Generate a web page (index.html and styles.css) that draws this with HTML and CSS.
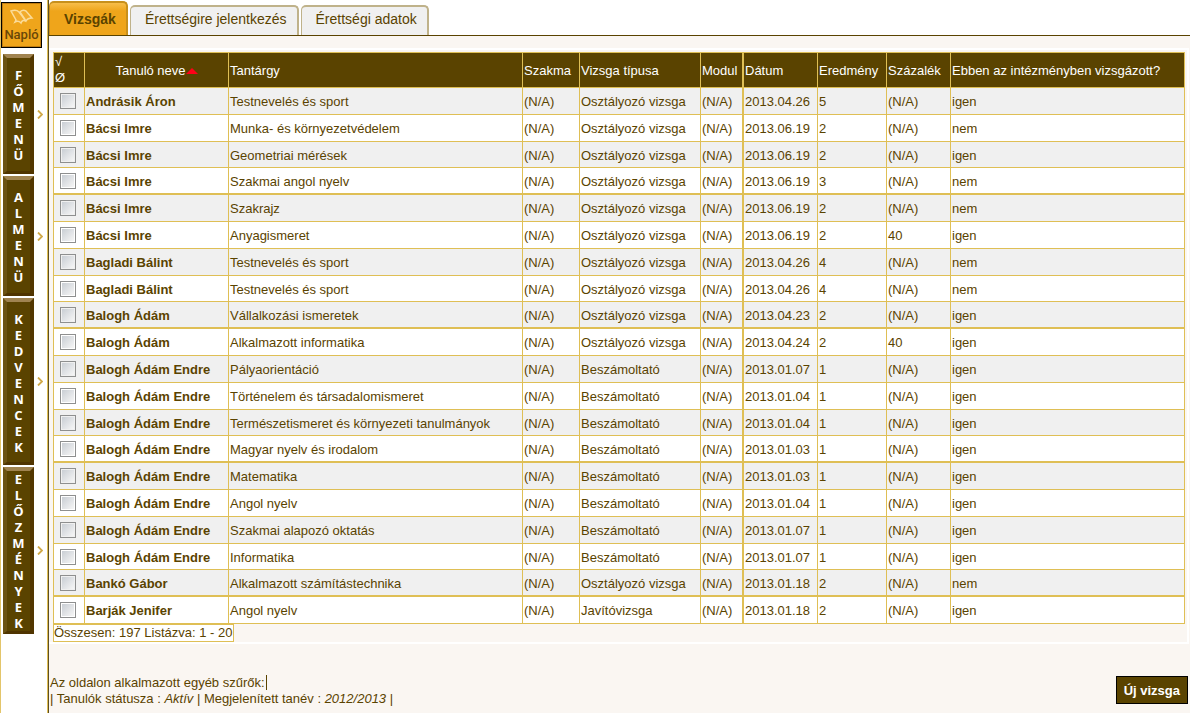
FILE: index.html
```html
<!DOCTYPE html>
<html lang="hu">
<head>
<meta charset="utf-8">
<title>Napló - Vizsgák</title>
<link rel="stylesheet" href="styles.css">
</head>
<body>
<div class="app">
  <aside class="sidebar">
    <a class="logo" href="#">
      <svg class="logo-icon" width="24" height="16" viewBox="0 0 24 16" aria-hidden="true">
        <path d="M1 2C4 1 7 1 9 3L16 12C14 11 12 11 11 14C9 12 7 12 5 13L6 11Z" fill="#f2ab2c" stroke="#fbdc9a" stroke-width="1.5"/>
        <path d="M10 3C12 1 14 1 16 2L22 9C19 9 17 10 16 12Z" fill="#f2ab2c" stroke="#fbdc9a" stroke-width="1.5"/>
      </svg>
      <span>Napló</span>
    </a>
    <nav class="menus" id="menus"></nav>
  </aside>
  <main class="content">
    <nav class="tabs">
      <a class="tab active" href="#">Vizsgák</a>
      <a class="tab" href="#">Érettségire jelentkezés</a>
      <a class="tab" href="#">Érettségi adatok</a>
    </nav>
    <section class="panel">
      <table class="exams">
        <colgroup>
          <col class="c-check"><col class="c-name"><col class="c-subject"><col class="c-trade"><col class="c-type"><col class="c-module"><col class="c-date"><col class="c-result"><col class="c-percent"><col>
        </colgroup>
        <thead>
          <tr>
            <th class="marks">√<br>Ø</th>
            <th class="sorted">Tanuló neve<svg class="sort-icon" width="12" height="6" viewBox="0 0 12 6" aria-hidden="true"><path d="M6 0L12 6H0Z" fill="#ff0018"/></svg></th>
            <th>Tantárgy</th><th>Szakma</th><th>Vizsga típusa</th><th>Modul</th><th>Dátum</th><th>Eredmény</th><th>Százalék</th><th>Ebben az intézményben vizsgázott?</th>
          </tr>
        </thead>
        <tbody id="rows"></tbody>
      </table>
      <p class="summary">Összesen: 197 Listázva: 1 - 20</p>
    </section>
    <footer class="footer">
      <div class="filters">
        <p><span class="caret">Az oldalon alkalmazott egyéb szűrők:</span></p>
        <p>| Tanulók státusza : <em>Aktív</em> | Megjelenített tanév : <em>2012/2013</em> |</p>
      </div>
      <button class="new" type="button">Új vizsga</button>
    </footer>
  </main>
</div>
<script src="app.js"></script>
</body>
</html>
```
FILE: styles.css
```css
* { box-sizing: border-box; }
body {
  margin: 0;
  background: #fff;
  color: #5a4300;
  font: 13px/16px "Liberation Sans", Arial, sans-serif;
}
p { margin: 0; }
a { color: inherit; text-decoration: none; }
.app { display: flex; min-height: 100vh; }

.sidebar {
  flex: none;
  width: 48px;
  padding: 2px 0 0 1px;
  border-left: 1px solid #e3c56a;
  border-right: 1px solid #dfbf55;
}
.logo {
  display: flex;
  flex-direction: column;
  align-items: center;
  width: 41px;
  height: 46px;
  margin-left: -1px;
  padding-top: 6px;
  border: 1px solid #000;
  background: #efa51b;
  box-shadow: inset 0 0 0 1px #c07d10;
  color: #6a4708;
  font: 500 13px/18px Roboto, "Liberation Sans", sans-serif;
}
.logo-icon { margin-bottom: 1px; }
.menus { display: grid; gap: 2px; padding: 6px 0 0 1px; }
.menu { display: flex; align-items: center; gap: 3px; }
.menu-button {
  width: 31px;
  padding: 9px 0 8px;
  border: 0;
  border-top: 4px solid #a08350;
  border-left: 4px solid #6b5212;
  border-right: 4px solid #523600;
  border-bottom: 3px solid #4f3400;
  background: #5a4300;
  color: #fff;
  font: bold 13px/16px "Open Sans", "Noto Sans", sans-serif;
}
.menu-button.medium { padding: 9px 0 7px; }
.menu-button.long { padding: 0; }
.menu-button span { display: block; }

.content {
  flex: 1;
  min-width: 0;
  display: flex;
  flex-direction: column;
  border-left: 1px solid #5e4e22;
  background: #faf6f2;
}
.tabs {
  display: flex;
  align-items: flex-end;
  height: 36px;
  gap: 2px;
  border-bottom: 1px solid #5a4300;
  background: #fff;
}
.tab {
  height: 30px;
  padding: 4px 10px 0 14px;
  border: 2px solid #bfb28a;
  border-width: 2px 2px 0 1px;
  border-radius: 5px 5px 0 0;
  background: #f0f0f0;
  font-size: 14px;
}
.tab.active {
  height: 34px;
  padding: 8px 10px 0 14px;
  border-color: #c8901c;
  background: linear-gradient(#f7bd4a, #efa51b 8px);
  font-weight: bold;
}

.panel {
  margin: 12px 1px 0 0;
  padding: 2px 2px 0 4px;
  border: 2px solid #fff;
  border-left: 0;
}
.exams {
  width: 100%;
  table-layout: fixed;
  border-collapse: separate;
  border-spacing: 0;
  border: 1px solid #dfbf55;
  border-width: 1px 0 0 1px;
}
.c-check { width: 31px; }
.c-name { width: 144px; }
.c-subject { width: 294px; }
.c-trade { width: 57px; }
.c-type { width: 121px; }
.c-module { width: 43px; }
.c-date { width: 74px; }
.c-result { width: 69px; }
.c-percent { width: 64px; }
.exams th, .exams td {
  padding: 2px 1px 0;
  border: 1px solid #dfbf55;
  border-width: 0 1px 1px 0;
  text-align: left;
  white-space: nowrap;
}
.exams th { height: 35px; background: #5a4300; color: #fff; font-weight: normal; }
.exams th.marks { padding-top: 0; }
.exams th.sorted { text-align: center; }
.sort-icon { vertical-align: 1px; }
.exams th:nth-child(6), .exams td:nth-child(6) { border-right-width: 2px; }
.exams td { height: 27px; background: #fff; }
.exams tr:nth-child(odd) td { background: #f0f0f0; }
.exams tr:nth-child(5n+3) td { height: 26px; }
.exams tr:nth-child(5n+4) td { border-bottom-width: 2px; }
.exams td:nth-child(2) { font-weight: bold; }
.exams td:first-child { padding: 0 2px 0 0; }
.check {
  appearance: none;
  display: block;
  width: 16px;
  height: 16px;
  margin: 0 auto;
  padding: 1px;
  border: 1px solid #8e8f8f;
  background: linear-gradient(135deg, #c9ced4, #f6f6f6) content-box #f6f6f6;
}
.summary {
  width: fit-content;
  padding-right: 1px;
  border: 1px solid #dfbf55;
  background: #fff;
}

.footer { display: flex; align-items: flex-start; justify-content: space-between; padding: 30px 2px 0 1px; }
.filters { padding-top: 1px; }
.caret { padding-right: 1px; border-right: 1px solid #5a4300; }
.new {
  margin-top: 2px;
  height: 28px;
  padding: 1px 7px 0;
  border: 1px solid #000;
  background: #5a4300;
  color: #fff;
  font: bold 13px/16px "Liberation Sans", Arial, sans-serif;
}
```
FILE: app.js
```js
const menus = [["FŐMENÜ", "short"], ["ALMENÜ", "short"], ["KEDVENCEK", "medium"], ["ELŐZMÉNYEK", "long"]];
document.getElementById("menus").innerHTML = menus.map(([name, size]) =>
  `<div class="menu"><button type="button" class="menu-button ${size}" aria-label="${name}">` +
  [...name].map(c => `<span>${c}</span>`).join("") +
  `</button><svg width="6" height="9" viewBox="0 0 6 9" aria-hidden="true"><path d="M1 .5L5 4.5L1 8.5" fill="none" stroke="#d0a848" stroke-width="1.8"/></svg></div>`
).join("");

const O = "Osztályozó vizsga", B = "Beszámoltató", E = "Balogh Ádám Endre";
const exams = [
  ["Andrásik Áron", "Testnevelés és sport", O, "04.26", 5, "(N/A)", "igen"],
  ["Bácsi Imre", "Munka- és környezetvédelem", O, "06.19", 2, "(N/A)", "nem"],
  ["Bácsi Imre", "Geometriai mérések", O, "06.19", 2, "(N/A)", "igen"],
  ["Bácsi Imre", "Szakmai angol nyelv", O, "06.19", 3, "(N/A)", "nem"],
  ["Bácsi Imre", "Szakrajz", O, "06.19", 2, "(N/A)", "nem"],
  ["Bácsi Imre", "Anyagismeret", O, "06.19", 2, "40", "igen"],
  ["Bagladi Bálint", "Testnevelés és sport", O, "04.26", 4, "(N/A)", "nem"],
  ["Bagladi Bálint", "Testnevelés és sport", O, "04.26", 4, "(N/A)", "nem"],
  ["Balogh Ádám", "Vállalkozási ismeretek", O, "04.23", 2, "(N/A)", "igen"],
  ["Balogh Ádám", "Alkalmazott informatika", O, "04.24", 2, "40", "igen"],
  [E, "Pályaorientáció", B, "01.07", 1, "(N/A)", "igen"],
  [E, "Történelem és társadalomismeret", B, "01.04", 1, "(N/A)", "igen"],
  [E, "Természetismeret és környezeti tanulmányok", B, "01.04", 1, "(N/A)", "igen"],
  [E, "Magyar nyelv és irodalom", B, "01.03", 1, "(N/A)", "igen"],
  [E, "Matematika", B, "01.03", 1, "(N/A)", "igen"],
  [E, "Angol nyelv", B, "01.04", 1, "(N/A)", "igen"],
  [E, "Szakmai alapozó oktatás", B, "01.07", 1, "(N/A)", "igen"],
  [E, "Informatika", B, "01.07", 1, "(N/A)", "igen"],
  ["Bankó Gábor", "Alkalmazott számítástechnika", O, "01.18", 2, "(N/A)", "nem"],
  ["Barják Jenifer", "Angol nyelv", "Javítóvizsga", "01.18", 2, "(N/A)", "igen"]
];
document.getElementById("rows").innerHTML = exams.map(([name, subject, type, date, result, percent, here]) =>
  `<tr><td><input class="check" type="checkbox" aria-label="${name}, ${subject}"></td>` +
  [name, subject, "(N/A)", type, "(N/A)", "2013." + date, result, percent, here].map(v => `<td>${v}</td>`).join("") +
  "</tr>"
).join("");
```
